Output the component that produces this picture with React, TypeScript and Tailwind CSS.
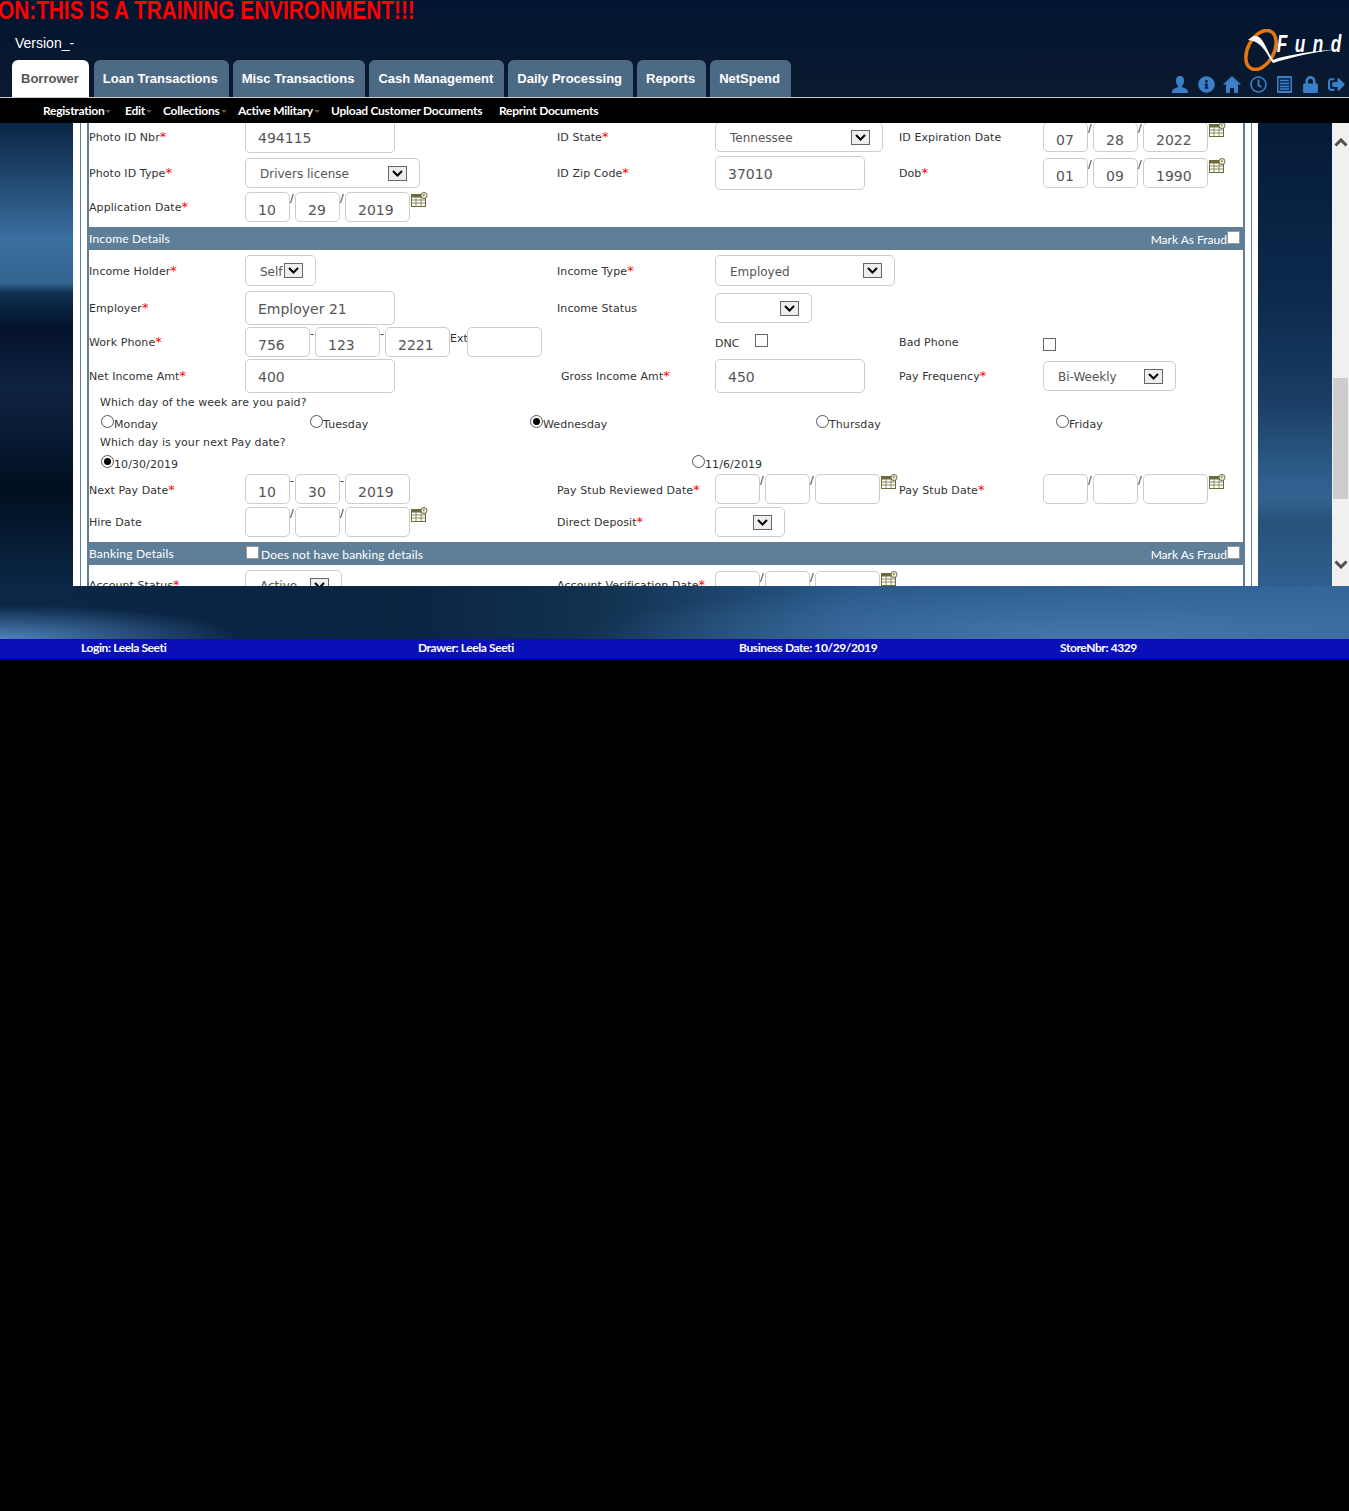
import React from "react";
import { FaInfoCircle, FaRegClock, FaLock, FaSignOutAlt } from "react-icons/fa";

const tabs = ["Loan Transactions", "Misc Transactions", "Cash Management", "Daily Processing", "Reports", "NetSpend"];

const subMenu = [
  { name: "Registration", arrow: true, width: "w-[82px]" },
  { name: "Edit", arrow: true, width: "w-[38px]" },
  { name: "Collections", arrow: true, width: "w-[75px]" },
  { name: "Active Military", arrow: true, width: "w-[93px]" },
  { name: "Upload Customer Documents", arrow: false, width: "w-[168px]" },
  { name: "Reprint Documents", arrow: false, width: "w-[110px]" },
];

const rowGrid = "grid grid-cols-[156px_312px_158px_184px_144px_1fr]";

const Label = ({ text, req, className = "" }: { text: string; req?: boolean; className?: string }) => (
  <span className={`whitespace-nowrap pt-px text-[11px] leading-[14px] tracking-[0.08px] text-[#333] ${className}`}>
    {text}
    {req && <span className="text-[13px] leading-[10px] text-[#f00]">*</span>}
  </span>
);

const TextBox = ({ value = "", className = "" }: { value?: string; className?: string }) => (
  <input
    readOnly
    value={value}
    className={`rounded-[5px] border border-[#ccc] bg-white pl-3 text-[14px] text-[#555] outline-none ${className}`}
  />
);

const SelectBox = ({ value = "", className = "" }: { value?: string; className?: string }) => (
  <div className={`flex items-center justify-between rounded-[5px] border border-[#ccc] bg-white pl-[14px] pr-3 ${className}`}>
    <span className="mt-[2px] text-[12px] text-[#555]">{value}</span>
    <span className="flex h-[15px] w-[19px] shrink-0 items-center justify-center border border-[#666] bg-[#eee]">
      <svg width="11" height="7" viewBox="0 0 11 7">
        <path d="M1 1l4.5 4.5L10 1" fill="none" stroke="#000" strokeWidth="2" />
      </svg>
    </span>
  </div>
);

const CalendarIcon = () => (
  <svg width="17" height="15" viewBox="0 0 17 15" className="shrink-0">
    <rect x="0.5" y="2.5" width="14" height="12" fill="#fff" stroke="#6d6b3a" />
    <rect x="0.5" y="2.5" width="14" height="3" fill="#6d6b3a" />
    <path d="M5 5v9M10 5v9M1 8h13M1 11h13" stroke="#8d8b62" strokeWidth="1" />
    <circle cx="13" cy="3.5" r="3" fill="#eeeedd" stroke="#6d6b3a" />
    <path d="M13 2v1.6h-1" stroke="#333" strokeWidth="0.7" fill="none" />
  </svg>
);

const DateParts = ({ parts = ["", "", ""], sep = "/", calendar = true }: { parts?: string[]; sep?: string; calendar?: boolean }) => (
  <div className="flex items-start">
    <TextBox value={parts[0]} className="h-[30px] w-[45px] pt-[6px]" />
    <span className="w-[5px] text-[11px] leading-[14px] text-[#333]">{sep}</span>
    <TextBox value={parts[1]} className="h-[30px] w-[45px] pt-[6px]" />
    <span className="w-[5px] text-[11px] leading-[14px] text-[#333]">{sep}</span>
    <TextBox value={parts[2]} className="h-[30px] w-[65px] pt-[6px]" />
    {calendar && <span className="ml-px"><CalendarIcon /></span>}
  </div>
);

const Radio = ({ label, checked, className = "" }: { label: string; checked?: boolean; className?: string }) => (
  <span className={`flex items-start text-[11px] text-[#333] ${className}`}>
    <span className="flex h-[13px] w-[13px] shrink-0 items-center justify-center rounded-full border border-[#555] bg-white">
      {checked && <span className="h-[7px] w-[7px] rounded-full bg-black" />}
    </span>
    <span className="mt-[3px] leading-[14px] tracking-[0.08px]">{label}</span>
  </span>
);

const SectionBar = ({ title, children }: { title: string; children?: React.ReactNode }) => (
  <div className="relative flex h-[23px] items-center justify-between bg-[#5f7f99] pr-[3px] font-['Lato',sans-serif] text-[12px] text-white">
    <span className="tracking-[0.2px]">{title}</span>
    {children}
    <span className="flex items-center">
      <span className="mt-[2px]">Mark As Fraud</span>
      <span className="mb-[2px] h-[13px] w-[13px] border border-[#999] bg-white" />
    </span>
  </div>
);

const Form = () => (
  <div className="-mt-1 font-['DejaVu_Sans',sans-serif]">
    <div className={`${rowGrid} h-[37px]`}>
      <Label text="Photo ID Nbr" req className="mt-[11px]" />
      <TextBox value="494115" className="h-[34px] w-[150px] pt-1" />
      <Label text="ID State" req className="mt-[11px]" />
      <SelectBox value="Tennessee" className="mt-[3px] h-[30px] w-[168px]" />
      <Label text="ID Expiration Date" className="mt-[11px]" />
      <div className="mt-[3px]"><DateParts parts={["07", "28", "2022"]} /></div>
    </div>
    <div className={`${rowGrid} h-[36px]`}>
      <Label text="Photo ID Type" req className="mt-[10px]" />
      <SelectBox value="Drivers license" className="mt-[2px] h-[30px] w-[175px]" />
      <Label text="ID Zip Code" req className="mt-[10px]" />
      <TextBox value="37010" className="h-[34px] w-[150px] pt-[2px]" />
      <Label text="Dob" req className="mt-[10px]" />
      <div className="mt-[2px]"><DateParts parts={["01", "09", "1990"]} /></div>
    </div>
    <div className={`${rowGrid} h-[35px]`}>
      <Label text="Application Date" req className="mt-[8px]" />
      <DateParts parts={["10", "29", "2019"]} />
    </div>
    <SectionBar title="Income Details" />
    <div className={`${rowGrid} h-[41px]`}>
      <Label text="Income Holder" req className="mt-[14px]" />
      <SelectBox value="Self" className="mt-[5px] h-[31px] w-[71px]" />
      <Label text="Income Type" req className="mt-[14px]" />
      <SelectBox value="Employed" className="mt-[5px] h-[31px] w-[180px]" />
    </div>
    <div className={`${rowGrid} h-[36px]`}>
      <Label text="Employer" req className="mt-[10px]" />
      <TextBox value="Employer 21" className="h-[34px] w-[150px] pt-[2px]" />
      <Label text="Income Status" className="mt-[10px]" />
      <SelectBox className="mt-[2px] h-[30px] w-[97px]" />
    </div>
    <div className={`${rowGrid} h-[32px]`}>
      <Label text="Work Phone" req className="mt-[8px]" />
      <div className="col-span-2 flex items-start">
        <TextBox value="756" className="h-[30px] w-[65px] pt-[6px]" />
        <span className="w-[5px] text-[11px] leading-[14px] text-[#333]">-</span>
        <TextBox value="123" className="h-[30px] w-[65px] pt-[6px]" />
        <span className="w-[5px] text-[11px] leading-[14px] text-[#333]">-</span>
        <TextBox value="2221" className="h-[30px] w-[65px] pt-[6px]" />
        <span className="mt-[5px] w-[17px] text-[11px] leading-[14px] text-[#333]">Ext</span>
        <TextBox className="h-[30px] w-[75px]" />
      </div>
      <div className="flex items-start">
        <Label text="DNC" className="mt-[9px] w-[40px]" />
        <span className="mt-[7px] h-[13px] w-[13px] border border-[#666] bg-white" />
      </div>
      <Label text="Bad Phone" className="mt-[8px]" />
      <span className="mt-[11px] h-[13px] w-[13px] border border-[#666] bg-white" />
    </div>
    <div className={`${rowGrid} h-[36px]`}>
      <Label text="Net Income Amt" req className="mt-[10px]" />
      <TextBox value="400" className="h-[34px] w-[150px] pt-[2px]" />
      <Label text="Gross Income Amt" req className="ml-1 mt-[10px]" />
      <TextBox value="450" className="h-[34px] w-[150px] pt-[2px]" />
      <Label text="Pay Frequency" req className="mt-[10px]" />
      <SelectBox value="Bi-Weekly" className="mt-[2px] h-[30px] w-[133px]" />
    </div>
    <div className="h-[20px] pl-[11px]"><Label text="Which day of the week are you paid?" className="block" /></div>
    <div className="flex h-[20px] pl-3">
      <Radio label="Monday" className="w-[209px]" />
      <Radio label="Tuesday" className="w-[220px]" />
      <Radio label="Wednesday" checked className="w-[286px]" />
      <Radio label="Thursday" className="w-[240px]" />
      <Radio label="Friday" />
    </div>
    <div className="h-[20px] pl-[11px]"><Label text="Which day is your next Pay date?" className="block" /></div>
    <div className="flex h-[19px] pl-3">
      <Radio label="10/30/2019" checked className="w-[591px]" />
      <Radio label="11/6/2019" />
    </div>
    <div className={`${rowGrid} h-[33px]`}>
      <Label text="Next Pay Date" req className="mt-[9px]" />
      <DateParts parts={["10", "30", "2019"]} sep="-" calendar={false} />
      <Label text="Pay Stub Reviewed Date" req className="mt-[9px]" />
      <DateParts />
      <Label text="Pay Stub Date" req className="mt-[9px]" />
      <DateParts />
    </div>
    <div className={`${rowGrid} h-[35px]`}>
      <Label text="Hire Date" className="mt-[8px]" />
      <DateParts />
      <Label text="Direct Deposit" req className="mt-[8px]" />
      <SelectBox className="h-[30px] w-[70px]" />
    </div>
    <SectionBar title="Banking Details">
      <span className="absolute left-[157px] flex items-center">
        <span className="mb-[2px] h-[13px] w-[13px] border border-[#999] bg-white" />
        <span className="ml-[2px] mt-[2px] tracking-[0.15px]">Does not have banking details</span>
      </span>
    </SectionBar>
    <div className={`${rowGrid} h-[36px]`}>
      <Label text="Account Status" req className="mt-[13px]" />
      <SelectBox value="Active" className="mt-[5px] h-[30px] w-[97px]" />
      <Label text="Account Verification Date" req className="mt-[13px]" />
      <div className="mt-[6px]"><DateParts /></div>
    </div>
  </div>
);

const UserIcon = () => (
  <svg width="16" height="17" viewBox="0 0 16 17" fill="currentColor">
    <path d="M8 0C5 0 4 2 4 5c0 2 1 4 2 5v1c-2 1-6 2-6 5v1h16v-1c0-3-4-4-6-5v-1c1-1 2-3 2-5 0-3-1-5-4-5z" />
  </svg>
);

const HomeIcon = () => (
  <svg width="18" height="17" viewBox="0 0 18 17" fill="currentColor">
    <path d="M9 0L0 8.500h3V17h4v-5h4v5h4V8.500h3z" />
  </svg>
);

const ListIcon = () => (
  <svg width="15" height="17" viewBox="0 0 15 17">
    <rect width="15" height="17" rx="1" fill="#3a7fc8" />
    <rect x="1.500" y="2" width="12" height="13" fill="#0b2a50" />
    <path d="M3 4.500h9M3 7.500h9M3 10.500h9M3 13h9" stroke="#3a7fc8" strokeWidth="1.500" />
  </svg>
);

const headerIcons = [
  <UserIcon key="user" />,
  <FaInfoCircle key="info" />,
  <HomeIcon key="home" />,
  <FaRegClock key="clock" />,
  <ListIcon key="list" />,
  <FaLock key="lock" />,
  <FaSignOutAlt key="exit" />,
];

const App = () => {
  return (
    <div className="min-h-[1511px] bg-black font-['Liberation_Sans',sans-serif]">
      <div className="flex h-[639px] flex-col bg-no-repeat bg-[radial-gradient(ellipse_240px_34px_at_0_100%,#4f82bb,transparent),radial-gradient(ellipse_520px_60px_at_1100px_100%,#4577a8,transparent),linear-gradient(to_right,#0b2745,#0a2442_400px,#123250_600px,#29588a_850px,#34659a),linear-gradient(to_bottom,#0a2544,#1d4268_47px,#3a6f9f_115px,#33648f_160px,#0f3050_170px,#03122b_205px,#0f2342_267px,#000f20_367px,#0b2745),linear-gradient(to_bottom,#051a38,#0c2a4d_177px,#1a3d64_277px,#2f5f8c_357px,#33628f_377px,#26517a_397px,#305f8e),linear-gradient(to_bottom,#021430,#0a1a30_97px)] [background-position:0_586px,0_586px,0_586px,0_123px,1258px_123px,0_0] [background-size:100%_53px,100%_53px,100%_53px,73px_463px,74px_463px,100%_100%]">
        <header className="flex h-[97px] justify-between">
          <div className="min-w-0 flex-1">
            <div className="h-[28px] overflow-hidden">
              <div className="-ml-[2px] -mt-[4px] origin-left scale-x-80 whitespace-nowrap text-[26px] font-bold leading-[28px] text-[#f00]">
                ON:THIS IS A TRAINING ENVIRONMENT!!!
              </div>
            </div>
            <div className="ml-[15px] h-[32px] pt-[6px] text-[14px] leading-[18px] text-white">Version_-</div>
            <nav className="ml-3 flex h-[37px] items-stretch font-bold">
              <a className="mr-[5px] rounded-t-[6px] bg-white pl-[9px] pr-[10px] pt-[11px] text-[13px] leading-[16px] text-[#555]">Borrower</a>
              {tabs.map((tab) => (
                <a key={tab} className="mr-1 rounded-t-[6px] bg-[#4d6a85] pl-[9px] pr-[11px] pt-[11px] text-[13px] leading-[16px] text-white">
                  {tab}
                </a>
              ))}
            </nav>
          </div>
          <div className="flex w-[190px] flex-col items-end pt-[29px]">
            <svg width="100" height="42" viewBox="0 0 100 42" className="mr-[6px]">
              <ellipse cx="18" cy="21" rx="13" ry="21" transform="rotate(28 18 21)" fill="none" stroke="#e8770f" strokeWidth="3.5" />
              <path d="M5 11c8-8 13-3 17 5s6 12 8 15c6-3 35-9 68-11-30 3-52 9-68 14-5-6-10-22-25-23z" fill="#fff" />
              <text x="45" y="23" transform="scale(0.75 1)" fill="#fff" fontFamily="'Liberation Sans', sans-serif" fontSize="23" fontWeight="700" fontStyle="italic" letterSpacing="10">Fund</text>
            </svg>
            <div className="mt-[5px] flex items-center text-[17px] text-[#3a7fc8]">
              {headerIcons.map((icon) => (
                <span key={icon.key} className="flex w-[26px] justify-center">{icon}</span>
              ))}
            </div>
          </div>
        </header>

        <div className="h-px bg-[#ccc]" />

        <div className="flex h-[25px] items-center bg-black pl-[43px] font-['Lato',sans-serif] text-[12px] font-bold tracking-[-0.25px] text-white">
          {subMenu.map((item) => (
            <span key={item.name} className={`flex items-center whitespace-nowrap ${item.width}`}>
              {item.name}
              {item.arrow && <span className="ml-px mt-[2px] h-0 w-0 border-x-[3px] border-t-[3px] border-x-transparent border-t-[#555]" />}
            </span>
          ))}
        </div>

        <div className="flex h-[463px] pl-[73px]">
          <div className="h-full w-[1185px] overflow-hidden bg-white pl-[7px] pr-[6px]">
            <div className="h-full border-x border-[#5f7f99] px-[6px]">
              <div className="h-full overflow-hidden border-x-2 border-[#5f7f99]">
                <Form />
              </div>
            </div>
          </div>
          <div className="ml-[74px] flex h-full w-[17px] flex-col items-center bg-[#f0f0f0]">
            <svg width="14" height="9" viewBox="0 0 14 9" className="mt-[15px] shrink-0">
              <path d="M1.500 7.500L7 2l5.500 5.500" fill="none" stroke="#505050" strokeWidth="3" />
            </svg>
            <div className="mt-[231px] h-[121px] w-[15px] bg-[#cdcdcd]" />
            <svg width="14" height="9" viewBox="0 0 14 9" className="mt-[61px] shrink-0">
              <path d="M1.500 1.500L7 7l5.500-5.500" fill="none" stroke="#505050" strokeWidth="3" />
            </svg>
          </div>
        </div>
      </div>

      <footer className="flex h-[20px] border-b-2 border-[#0000f0] bg-[#0a0fb8] pl-[81px] font-['Lato',sans-serif] text-[12px] font-bold leading-[18px] tracking-[-0.4px] text-white">
        <span className="w-[337px]">Login: Leela Seeti</span>
        <span className="w-[321px]">Drawer: Leela Seeti</span>
        <span className="w-[321px]">Business Date: 10/29/2019</span>
        <span>StoreNbr: 4329</span>
      </footer>
    </div>
  );
};

export default App;
